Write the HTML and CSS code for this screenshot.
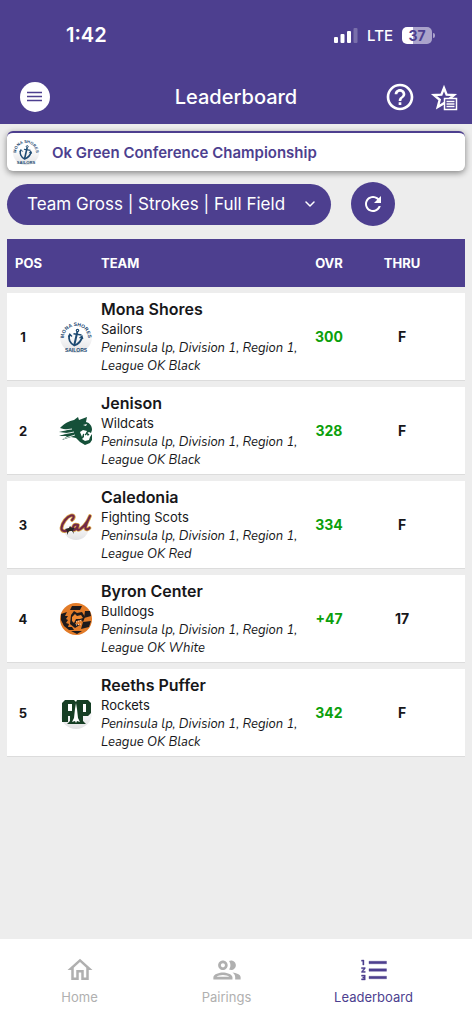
FILE: index.html
```html
<!DOCTYPE html>
<html lang="en">
<head>
<meta charset="utf-8">
<meta name="viewport" content="width=device-width, initial-scale=1">
<title>Leaderboard</title>
<link rel="stylesheet" href="styles.css">
</head>
<body>
<div class="app">
  <header class="top">
    <div class="status">
      <span class="time">1:42</span>
      <div class="status-right">
        <svg class="signal" viewBox="0 0 24 16" aria-hidden="true"><rect x="0" y="10" width="4" height="6" rx="1"/><rect x="6.500" y="7" width="4" height="9" rx="1"/><rect x="13" y="4" width="4" height="12" rx="1"/><rect x="19.500" y="1" width="4" height="15" rx="1" opacity=".25"/></svg>
        <span class="network">LTE</span>
        <span class="battery">37</span>
      </div>
    </div>
    <div class="bar">
      <button class="menu" aria-label="Menu"><svg viewBox="0 0 30 30"><path d="M7 10.500h15M7 14.500h15M7 18.500h15" stroke="#4d3f8f" stroke-width="1.700"/></svg></button>
      <h1 class="title">Leaderboard</h1>
      <div class="actions">
        <button class="icon-btn" aria-label="Help"><svg viewBox="0 0 24 24" fill="#fff"><path d="M11 18h2v-2h-2v2zm1-16C6.480 2 2 6.480 2 12s4.480 10 10 10 10-4.480 10-10S17.520 2 12 2zm0 18c-4.410 0-8-3.590-8-8s3.590-8 8-8 8 3.590 8 8-3.590 8-8 8zm0-14c-2.210 0-4 1.790-4 4h2c0-1.100.9-2 2-2s2 .9 2 2c0 2-3 1.750-3 5h2c0-2.250 3-2.500 3-5 0-2.210-1.790-4-4-4z"/></svg></button>
        <button class="icon-btn" aria-label="Favorites"><svg viewBox="0 0 32 32"><path d="M16 7l2.600 6.600 7.400.5-5.700 4.700 1.900 7.200L16 22.200l-6.200 3.800 1.900-7.200L6 14.100l7.400-.5z" fill="none" stroke="#fff" stroke-width="2.400"/><path d="M16.500 17.500h12v11h-12z" fill="#4d3f8f" stroke="#fff" stroke-width="1.500"/><path d="M18.500 20.500h8M18.500 23h8M18.500 25.500h8" stroke="#fff" stroke-width="1.300"/></svg></button>
      </div>
    </div>
  </header>

  <main class="content">
    <section class="event">
      <svg class="event-logo" viewBox="0 0 34 34" aria-hidden="true"><use href="#mona"/></svg>
      <h2 class="event-name">Ok Green Conference Championship</h2>
    </section>

    <div class="filters">
      <div class="select-wrap">
        <select class="select" aria-label="Leaderboard view"><option>Team Gross | Strokes | Full Field</option></select>
        <svg class="chevron" viewBox="0 0 12 12" aria-hidden="true"><path d="M2 4l4 4 4-4" fill="none" stroke="#fff" stroke-width="1.500" stroke-linecap="round" stroke-linejoin="round"/></svg>
      </div>
      <button class="refresh" aria-label="Refresh"><svg viewBox="0 0 24 24" fill="#fff"><path d="M17.650 6.350C16.200 4.900 14.210 4 12 4c-4.420 0-7.990 3.580-7.990 8s3.570 8 7.990 8c3.730 0 6.840-2.550 7.730-6h-2.080c-.82 2.330-3.040 4-5.650 4-3.310 0-6-2.690-6-6s2.690-6 6-6c1.660 0 3.140.69 4.220 1.780L13 11h7V4l-2.350 2.350z"/></svg></button>
    </div>

    <table class="board">
      <colgroup><col class="c-pos"><col class="c-logo"><col><col class="c-ovr"><col class="c-thru"><col class="c-end"></colgroup>
      <thead>
        <tr><th class="h-pos" colspan="2" scope="col">POS</th><th class="h-team" scope="col">TEAM</th><th scope="col">OVR</th><th scope="col">THRU</th><td></td></tr>
      </thead>
      <tbody>
        <tr>
          <td class="pos">1</td>
          <td><svg class="logo" viewBox="0 0 34 34" aria-hidden="true">
            <defs><linearGradient id="disc" x1="0" y1="0" x2="0" y2="1"><stop offset=".35" stop-color="#fff"/><stop offset="1" stop-color="#e2e2e4"/></linearGradient>
            <path id="arc" d="M5 18A12 12 0 0 1 29 18"/></defs>
            <g id="mona">
              <circle cx="17" cy="17" r="16" fill="url(#disc)"/>
              <text class="crest-text"><textPath href="#arc" startOffset="50%" text-anchor="middle">MONA SHORES</textPath></text>
              <g fill="none" stroke="#1d4a72"><circle cx="18.500" cy="10.500" r="1.200" stroke-width="1.200"/><path d="M18.300 12l-3 13" stroke-width="2"/><path d="M14.500 13.700l8 1.300" stroke-width="1.400"/><path d="M10.500 15c-1.500 4 .5 8.500 4.800 10.500 4-1.500 7-4.500 7.700-8.500" stroke-width="1.800"/><path d="M9.500 17l1.300-3 2.200 2.500M20.500 18l2.500-2 .8 3" stroke-width="1.200"/></g>
              <text class="crest-text" x="17" y="32" text-anchor="middle">SAILORS</text>
            </g></svg></td>
          <td class="team"><h3 class="name">Mona Shores</h3><p class="mascot">Sailors</p><p class="league">Peninsula lp, Division 1, Region 1, League OK Black</p></td>
          <td class="ovr">300</td><td class="thru">F</td><td></td>
        </tr>
        <tr>
          <td class="pos">2</td>
          <td><svg class="logo" viewBox="0 0 34 34" aria-hidden="true">
            <path fill="#155039" d="M1 14C6 9 10 7 15 6l4-3 1 3 8-3-1 5c4 1 6 4 6 8l-1 3-2-1-2 1-3 0 0 4-2 2 3 2 4-1 1-3 2-3 0 6-2 3-5 2-5-3-4-4-5-1-9 3 5-4-8 0 8-3-8-1 8-2z"/>
            <path stroke="#fff" stroke-width=".9" fill="none" d="M1 16.500l12-1.500M2 20.500l13-2.500M5 24.500l11-3.500"/><path fill="#fff" d="M21 18l3-2 4 1-1 2-3 1-1 3zM24 11l4-1-1 2z"/><path d="M26 21l2-2 1 2 1-1" fill="none" stroke="#155039" stroke-width="1.300"/></svg></td>
          <td class="team"><h3 class="name">Jenison</h3><p class="mascot">Wildcats</p><p class="league">Peninsula lp, Division 1, Region 1, League OK Black</p></td>
          <td class="ovr">328</td><td class="thru">F</td><td></td>
        </tr>
        <tr>
          <td class="pos">3</td>
          <td><svg class="logo" viewBox="0 0 34 34" aria-hidden="true">
            <circle cx="17" cy="19" r="13" fill="url(#disc)"/>
            <path fill="none" stroke="#d9a548" stroke-width="3.800" stroke-linecap="round" stroke-linejoin="round" d="M13 12c3-3 2-5-1-4.500C8 8.500 3 15 2.500 20c-.2 4 5 4 10 .500M19 17c-4-1.500-5 1-5 3.500s3 2 5-3c-1.500 4.500 0 5.500 3 3C26 18 30 11 31 8c-2 4-5 10-4.500 12.500.5 1.500 2.500 1 4-.500"/>
            <path fill="none" stroke="#722846" stroke-width="2.200" stroke-linecap="round" stroke-linejoin="round" d="M13 12c3-3 2-5-1-4.500C8 8.500 3 15 2.500 20c-.2 4 5 4 10 .500M19 17c-4-1.500-5 1-5 3.500s3 2 5-3c-1.500 4.500 0 5.500 3 3C26 18 30 11 31 8c-2 4-5 10-4.500 12.500.5 1.500 2.500 1 4-.500"/>
            <path fill="#292626" d="M6 21l4-1 1-2 2 2 3 0-2 2 1 4-2-3-3 0-2 4v-4z"/></svg></td>
          <td class="team"><h3 class="name">Caledonia</h3><p class="mascot">Fighting Scots</p><p class="league">Peninsula lp, Division 1, Region 1, League OK Red</p></td>
          <td class="ovr">334</td><td class="thru">F</td><td></td>
        </tr>
        <tr>
          <td class="pos">4</td>
          <td><svg class="logo" viewBox="0 0 34 34" aria-hidden="true">
            <circle cx="17" cy="17" r="16" fill="#e27b28"/>
            <path fill="#1d1a1c" d="M13 4h10l-2 4H11zM2 12l6-2-2 4 3 0-2 3 2 1-2 3 3 1-1 3 4 0 2 3-5 0-5-4-3-6zM26 9l5 0 1 5-7 2zM24 20l8-1-2 6-8 2zM12 29h11l-5 3z"/>
            <path fill="#1d1a1c" d="M12 13l3-4 3 2 5-1 3 5-2 5-2-2-4 1-2 3 5 1-5 3-5-4z"/><path fill="#ef8932" d="M13 15l3-3 2 2 4-1 2 3-3 1-4 0-2 4-2-2z"/><path stroke="#f5d5b6" stroke-width="1.200" stroke-dasharray="1 1" d="M17 20l6-2M17 23l5-1"/></svg></td>
          <td class="team"><h3 class="name">Byron Center</h3><p class="mascot">Bulldogs</p><p class="league">Peninsula lp, Division 1, Region 1, League OK White</p></td>
          <td class="ovr">+47</td><td class="thru">17</td><td></td>
        </tr>
        <tr>
          <td class="pos">5</td>
          <td><svg class="logo" viewBox="0 0 34 34" aria-hidden="true">
            <circle cx="17" cy="17" r="16" fill="url(#disc)"/>
            <path fill="#163e24" fill-rule="evenodd" d="M3 7l3-3h9l2 2 1-2h11l3 3v10l-3 3h-5v5l3 3H8l3-3v-5H9v6H3zM9 8v7h4V8zM24 8v8h3V8z"/>
            <path fill="#fff" d="M17 7l1 6 1 9 2 4-3-1-1 2-1-2-3 1 2-4 1-9z"/></svg></td>
          <td class="team"><h3 class="name">Reeths Puffer</h3><p class="mascot">Rockets</p><p class="league">Peninsula lp, Division 1, Region 1, League OK Black</p></td>
          <td class="ovr">342</td><td class="thru">F</td><td></td>
        </tr>
      </tbody>
    </table>
  </main>

  <nav class="tabs" aria-label="Main">
    <a class="tab" href="#home"><svg viewBox="0 0 24 24" fill="currentColor"><path d="M12 5.690l5 4.500V18h-2v-6H9v6H7v-7.810l5-4.500M12 3L2 12h3v8h6v-6h2v6h6v-8h3L12 3z"/></svg>Home</a>
    <a class="tab" href="#pairings"><svg viewBox="1 1 22 22" fill="currentColor"><path d="M9 13.750c-2.340 0-7 1.170-7 3.500V19h14v-1.750c0-2.330-4.660-3.500-7-3.500zM4.340 17c.84-.58 2.870-1.250 4.660-1.250s3.820.67 4.660 1.250H4.340zM9 12c1.930 0 3.500-1.570 3.500-3.500S10.930 5 9 5 5.500 6.570 5.500 8.500 7.070 12 9 12zm0-5c.83 0 1.500.67 1.500 1.500S9.830 10 9 10s-1.500-.67-1.500-1.500S8.170 7 9 7zm7.040 6.810c1.160.84 1.960 1.960 1.960 3.440V19h4v-1.750c0-2.020-3.500-3.170-5.960-3.440zM15 12c1.930 0 3.500-1.570 3.500-3.500S16.930 5 15 5c-.54 0-1.040.13-1.500.35.63.89 1 1.980 1 3.150s-.37 2.260-1 3.150c.46.22.96.35 1.500.35z"/></svg>Pairings</a>
    <a class="tab active" href="#leaderboard" aria-current="page"><svg viewBox="0 0 24 24" fill="currentColor"><path d="M8 5h14v2H8zM8 11h14v2H8zM8 17h14v2H8zM2 17h2v.5H3v1h1v.5H2v1h3v-4H2v1zm1-9h1V4H2v1h1v3zm-1 3h1.800L2 13.100v.9h3v-1H3.200L5 10.900V10H2v1z" stroke="currentColor" stroke-width=".3"/></svg>Leaderboard</a>
  </nav>
</div>
</body>
</html>
```
FILE: styles.css
```css
* { box-sizing: border-box; }

body {
  margin: 0;
  background: #ededed;
  color: #17171a;
  font-family: Inter, "Liberation Sans", sans-serif;
}

h1, h2, h3, p { margin: 0; }

button {
  padding: 0;
  border: 0;
  background: none;
  cursor: pointer;
}

svg { display: block; }

.app {
  display: flex;
  flex-direction: column;
  min-height: 100vh;
}

.top { background: #4d3f8f; color: #fff; }

.status {
  display: flex;
  align-items: center;
  justify-content: space-between;
  height: 70px;
  padding: 0 40px 0 66px;
}

.time { font-size: 20px; font-weight: 600; }

.status-right { display: flex; align-items: center; gap: 9px; }

.signal { width: 24px; height: 16px; fill: #fff; }

.network { font-size: 15px; font-weight: 500; }

.battery {
  position: relative;
  width: 30px;
  border-radius: 5px;
  background: linear-gradient(90deg, #fff 37%, #aaa3cb 37%);
  color: #4d3f8f;
  font-size: 14px;
  font-weight: 700;
  line-height: 17px;
  text-align: center;
}

.battery::after {
  content: "";
  position: absolute;
  top: 6px;
  right: -3px;
  width: 2px;
  height: 5px;
  border-radius: 0 2px 2px 0;
  background: #aaa3cb;
}

.bar {
  display: grid;
  grid-template-columns: 1fr auto 1fr;
  align-items: center;
  height: 54px;
  padding: 0 12px;
}

.menu {
  width: 30px;
  height: 30px;
  margin-left: 8px;
  border-radius: 50%;
  background: #fff;
}

.title { font-size: 20px; font-weight: 500; }

.actions { display: flex; justify-content: flex-end; gap: 12px; }

.icon-btn { width: 32px; height: 32px; }

.content { flex: 1; padding: 7px 7px 24px; }

.event {
  display: flex;
  align-items: center;
  gap: 12px;
  height: 40px;
  padding: 0 5px;
  border-top: 2px solid #4d3f8f;
  border-radius: 6px;
  background: #fff;
  box-shadow: 0 2px 6px rgba(0, 0, 0, .45);
}

.event-logo { width: 28px; height: 28px; }

.event-name { color: #4d3f8f; font-size: 15px; font-weight: 600; }

.filters {
  display: flex;
  align-items: center;
  gap: 20px;
  padding: 11px 0 13px;
}

.select-wrap {
  display: grid;
  flex: 0 1 324px;
  align-items: center;
}

.select, .chevron { grid-area: 1 / 1; }

.select {
  width: 100%;
  height: 41px;
  padding: 0 40px 0 20px;
  border: 0;
  border-radius: 21px;
  appearance: none;
  background: #4d3f8f;
  color: #fff;
  font: 400 17px Inter, "Liberation Sans", sans-serif;
}

.chevron {
  justify-self: end;
  width: 12px;
  height: 12px;
  margin-right: 15px;
  pointer-events: none;
}

.refresh {
  display: grid;
  flex: none;
  place-items: center;
  width: 44px;
  height: 44px;
  border-radius: 50%;
  background: #4d3f8f;
}

.refresh svg { width: 24px; height: 24px; }

.board {
  width: 100%;
  border-spacing: 0 6px;
  margin: -6px 0;
  table-layout: fixed;
}

.c-pos { width: 52px; }
.c-logo { width: 42px; }
.c-ovr { width: 60px; }
.c-thru { width: 86px; }
.c-end { width: 20px; }

.board th, .board td { padding: 0; }

.board thead tr {
  height: 48px;
  background: #4d3f8f;
  color: #fff;
  font-size: 13px;
}

.board th { font-weight: 700; }
.board .h-pos { padding-left: 8px; text-align: left; }
.board .h-team { text-align: left; }

.board tbody td {
  border-bottom: 1px solid #dcdcdc;
  background: #fff;
}

.board .pos {
  padding-right: 20px;
  font-size: 13px;
  font-weight: 700;
  text-align: center;
}

.logo { width: 34px; height: 34px; }

.crest-text {
  fill: #1d4a72;
  font-family: "Liberation Sans", sans-serif;
  font-size: 5px;
  font-weight: 700;
}

.board .team { padding: 6px 0 5px; }

.name { font-size: 16px; font-weight: 600; line-height: 21px; }

.mascot { font-size: 13px; line-height: 19px; }

.league {
  font-family: Nunito, Lato, sans-serif;
  font-size: 13px;
  font-style: italic;
  line-height: 18px;
}

.ovr { color: #0c9f0c; }

.ovr, .thru {
  font-size: 14px;
  font-weight: 700;
  text-align: center;
}

.tabs {
  display: grid;
  grid-template-columns: repeat(3, 1fr);
  height: 85px;
  padding: 16px 25px 0 6px;
  background: #fff;
}

.tab {
  display: flex;
  flex-direction: column;
  align-items: center;
  gap: 4px;
  color: #b0b0b0;
  font-size: 13px;
  text-decoration: none;
}

.tab svg { width: 30px; height: 30px; }

.tab.active { color: #4d3f8f; }
```
